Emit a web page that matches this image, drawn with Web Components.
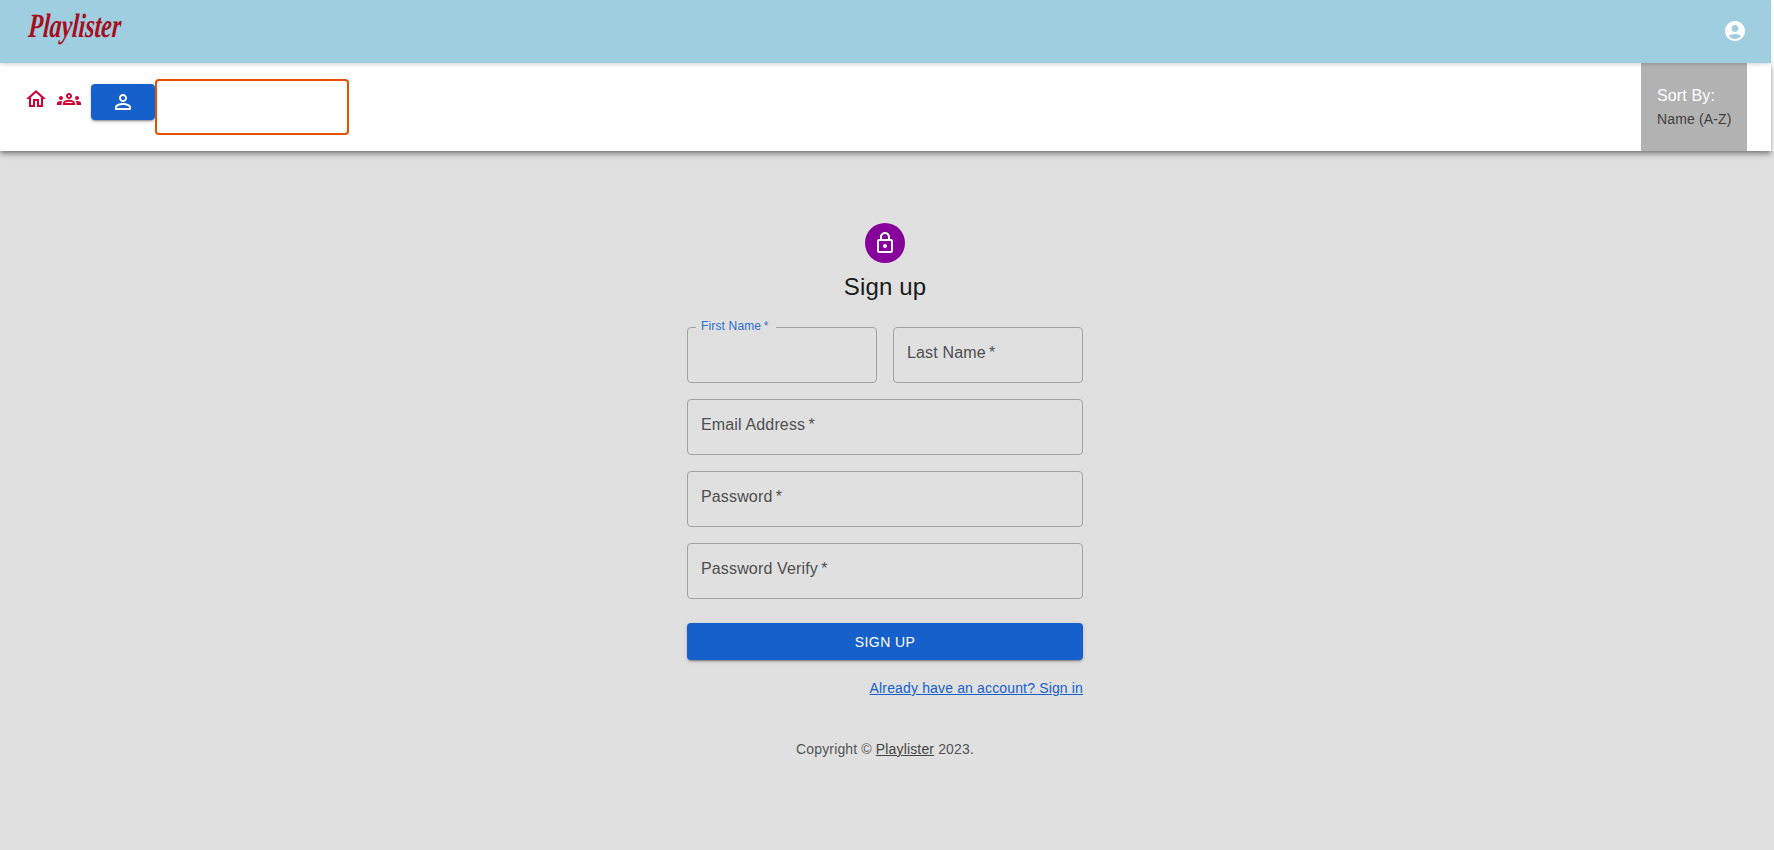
<!DOCTYPE html>
<html>
<head>
<meta charset="utf-8">
<title>Playlister</title>
<style>
  html, body { margin: 0; height: 100%; overflow: hidden; background: #fff; }
  body { font-family: "Liberation Sans", Arial, sans-serif; letter-spacing: .15px; }
</style>
</head>
<body>
<app-shell></app-shell>

<script>
const ICONS = {
  account: '<path d="M12 2C6.48 2 2 6.48 2 12s4.48 10 10 10 10-4.48 10-10S17.52 2 12 2zm0 4c1.93 0 3.5 1.57 3.5 3.5S13.93 13 12 13s-3.5-1.57-3.5-3.5S10.07 6 12 6zm0 14c-2.03 0-4.43-.82-6.14-2.88C7.55 15.8 9.68 15 12 15s4.45.8 6.14 2.12C16.43 19.18 14.03 20 12 20z"/>',
  home: '<path d="m12 5.69 5 4.5V18h-2v-6H9v6H7v-7.81l5-4.5M12 3 2 12h3v8h6v-6h2v6h6v-8h3L12 3z"/>',
  groups: '<path d="M4 13c1.1 0 2-.9 2-2s-.9-2-2-2-2 .9-2 2 .9 2 2 2zm1.13 1.1c-.37-.06-.74-.1-1.13-.1-.99 0-1.93.21-2.78.58C.48 14.9 0 15.62 0 16.43V18h4.5v-1.61c0-.83.23-1.61.63-2.29zM20 13c1.1 0 2-.9 2-2s-.9-2-2-2-2 .9-2 2 .9 2 2 2zm4 3.43c0-.81-.48-1.53-1.22-1.85-.85-.37-1.79-.58-2.78-.58-.39 0-.76.04-1.13.1.4.68.63 1.46.63 2.29V18H24v-1.57zm-7.76-2.78C15.07 13.13 13.63 12.75 12 12.75s-3.07.39-4.24.9C6.68 14.13 6 15.21 6 16.39V18h12v-1.61c0-1.18-.68-2.26-1.76-2.74zM8.07 16c.09-.23.13-.39.91-.69.97-.38 1.99-.56 3.02-.56s2.05.18 3.02.56c.77.3.81.46.91.69H8.07zM12 8c.55 0 1 .45 1 1s-.45 1-1 1-1-.45-1-1 .45-1 1-1m0-2c-1.66 0-3 1.34-3 3s1.34 3 3 3 3-1.34 3-3-1.34-3-3-3z"/>',
  person: '<path d="M12 5.9c1.16 0 2.1.94 2.1 2.1s-.94 2.1-2.1 2.1S9.9 9.16 9.9 8s.94-2.1 2.1-2.1m0 9c2.97 0 6.1 1.46 6.1 2.1v1.1H5.9V17c0-.64 3.13-2.1 6.1-2.1M12 4C9.79 4 8 5.79 8 8s1.79 4 4 4 4-1.79 4-4-1.79-4-4-4zm0 9c-2.67 0-8 1.34-8 4v3h16v-3c0-2.66-5.33-4-8-4z"/>',
  lock: '<path d="M18 8h-1V6c0-2.76-2.24-5-5-5S7 3.24 7 6v2H6c-1.1 0-2 .9-2 2v10c0 1.1.9 2 2 2h12c1.1 0 2-.9 2-2V10c0-1.1-.9-2-2-2zM9 6c0-1.66 1.34-3 3-3s3 1.34 3 3v2H9V6zm9 14H6V10h12v10zm-6-3c1.1 0 2-.9 2-2s-.9-2-2-2-2 .9-2 2 .9 2 2 2z"/>'
}

class MuiIcon extends HTMLElement {
  connectedCallback(){
    const size = this.getAttribute('size') || 24
    const name = this.getAttribute('name')
    this.attachShadow({mode: 'open'}).innerHTML = `
      <style>
        :host { display: inline-flex; }
        svg { display: block; fill: currentColor; }
      </style>
      <svg width="${size}" height="${size}" viewBox="0 0 24 24">${ICONS[name]}</svg>
    `
  }
}

class TopBar extends HTMLElement {
  constructor(){
    super()
    this.attachShadow({mode: 'open'}).innerHTML = `
      <style>
        :host {
          display: flex;
          align-items: flex-start;
          justify-content: space-between;
          height: 63px;
          margin-right: 3px;
          background: #9fcee0;
          box-shadow: 0 2px 4px -1px rgba(0,0,0,.2);
          position: relative;
          z-index: 2;
        }
        .logo {
          margin: 8px 0 0 30px;
          font: italic 700 34px/36px "Liberation Serif", serif;
          letter-spacing: 0;
          color: #a50f1e;
          transform: scaleX(.7) skewX(-6deg);
          transform-origin: left top;
        }
        .user {
          margin: 19px 24px 0 0;
          color: #fff;
          display: flex;
        }
      </style>
      <div class="logo">Playlister</div>
      <div class="user"><mui-icon name="account" size="24"></mui-icon></div>
    `
  }
}

class NavBar extends HTMLElement {
  constructor(){
    super()
    this.attachShadow({mode: 'open'}).innerHTML = `
      <style>
        :host {
          display: flex;
          height: 88px;
          margin-right: 3px;
          background: #fff;
          box-shadow: 0 2px 4px -1px rgba(0,0,0,.3), 0 4px 5px 0 rgba(0,0,0,.2), 0 1px 10px 0 rgba(0,0,0,.12);
          position: relative;
          z-index: 1;
        }
        .left { display: flex; flex: 1; align-items: flex-start; padding-left: 24px; }
        .home { color: #d50032; margin-top: 24px; display: flex; }
        .groups { color: #d50032; margin: 24px 0 0 9px; display: flex; }
        .me {
          width: 64px;
          height: 36px;
          margin: 21px 0 0 10px;
          border-radius: 4px;
          background: #1660cb;
          color: #fff;
          display: flex;
          align-items: center;
          justify-content: center;
          box-shadow: 0 3px 1px -2px rgba(0,0,0,.2), 0 2px 2px 0 rgba(0,0,0,.14), 0 1px 5px 0 rgba(0,0,0,.12);
        }
        .search {
          box-sizing: border-box;
          width: 194px;
          height: 56px;
          margin-top: 16px;
          border: 2px solid #e65100;
          border-radius: 4px;
        }
        .sort {
          box-sizing: border-box;
          width: 106px;
          margin-right: 24px;
          background: #b2b2b2;
          padding: 22px 0 0 16px;
        }
        .sort .label { color: #fff; font-size: 16px; line-height: 22px; }
        .sort .value { color: #404040; font-size: 14px; line-height: 24px; }
      </style>
      <div class="left">
        <span class="home"><mui-icon name="home" size="24"></mui-icon></span>
        <span class="groups"><mui-icon name="groups" size="24"></mui-icon></span>
        <span class="me"><mui-icon name="person" size="24"></mui-icon></span>
        <div class="search"></div>
      </div>
      <div class="sort">
        <div class="label">Sort By:</div>
        <div class="value">Name (A-Z)</div>
      </div>
    `
  }
}

class TextBox extends HTMLElement {
  connectedCallback(){
    const label = this.getAttribute('label')
    this.attachShadow({mode: 'open'}).innerHTML = `
      <style>
        :host { display: block; position: relative; min-width: 0; }
        .box {
          box-sizing: border-box;
          height: 56px;
          border: 1px solid #a3a3a3;
          border-radius: 4px;
        }
        .label {
          position: absolute;
          left: 14px;
          top: 16px;
          font-size: 16px;
          line-height: 20px;
          color: #4f4f4f;
          white-space: nowrap;
        }
        :host([shrink]) .label {
          top: -8px;
          left: 9px;
          padding: 0 7px 0 5px;
          font-size: 12px;
          line-height: 14px;
          color: #2b6fd0;
          background: #e0e0e0;
        }
      </style>
      <div class="box"></div>
      <div class="label">${label}&thinsp;*</div>
    `
  }
}

class SignUpForm extends HTMLElement {
  constructor(){
    super()
    this.attachShadow({mode: 'open'}).innerHTML = `
      <style>
        :host {
          display: flex;
          flex-direction: column;
          align-items: center;
          width: 396px;
          margin: 0 auto;
          padding-top: 72px;
        }
        .avatar {
          width: 40px;
          height: 40px;
          border-radius: 50%;
          background: #87009b;
          color: #fff;
          display: flex;
          align-items: center;
          justify-content: center;
        }
        h1 {
          margin: 8px 0 0;
          font-size: 24px;
          font-weight: 400;
          line-height: 32px;
          color: #1a1a1a;
        }
        .fields {
          display: grid;
          grid-template-columns: 1fr 1fr;
          gap: 16px;
          width: 100%;
          margin-top: 24px;
        }
        .wide { grid-column: span 2; }
        button {
          width: 100%;
          height: 37px;
          margin-top: 24px;
          border: 0;
          border-radius: 4px;
          background: #1660cb;
          color: #fff;
          font: 14px "Liberation Sans", sans-serif;
          letter-spacing: .4px;
          box-shadow: 0 3px 1px -2px rgba(0,0,0,.2), 0 2px 2px 0 rgba(0,0,0,.14), 0 1px 5px 0 rgba(0,0,0,.12);
        }
        .signin {
          align-self: flex-end;
          margin-top: 18px;
          font-size: 14px;
          line-height: 20px;
          color: #1660cb;
          text-decoration: underline;
        }
        .copy {
          margin-top: 41px;
          font-size: 14px;
          line-height: 20px;
          color: #555;
        }
        .copy u { color: #444; }
      </style>
      <div class="avatar"><mui-icon name="lock" size="24"></mui-icon></div>
      <h1>Sign up</h1>
      <div class="fields">
        <text-box label="First Name" shrink></text-box>
        <text-box label="Last Name"></text-box>
        <text-box class="wide" label="Email Address"></text-box>
        <text-box class="wide" label="Password"></text-box>
        <text-box class="wide" label="Password Verify"></text-box>
      </div>
      <button type="button">SIGN UP</button>
      <a class="signin">Already have an account? Sign in</a>
      <div class="copy">Copyright © <u>Playlister</u> 2023.</div>
    `
  }
}

class AppShell extends HTMLElement {
  constructor(){
    super()
    this.attachShadow({mode: 'open'}).innerHTML = `
      <style>
        :host {
          display: flex;
          flex-direction: column;
          height: 850px;
          background: #fff;
          overflow: hidden;
        }
        main { flex: 1; padding-right: 4px; background: #e0e0e0; }
      </style>
      <top-bar></top-bar>
      <nav-bar></nav-bar>
      <main><sign-up-form></sign-up-form></main>
    `
  }
}

customElements.define('mui-icon', MuiIcon)
customElements.define('top-bar', TopBar)
customElements.define('nav-bar', NavBar)
customElements.define('text-box', TextBox)
customElements.define('sign-up-form', SignUpForm)
customElements.define('app-shell', AppShell)
</script>
</body>
</html>
